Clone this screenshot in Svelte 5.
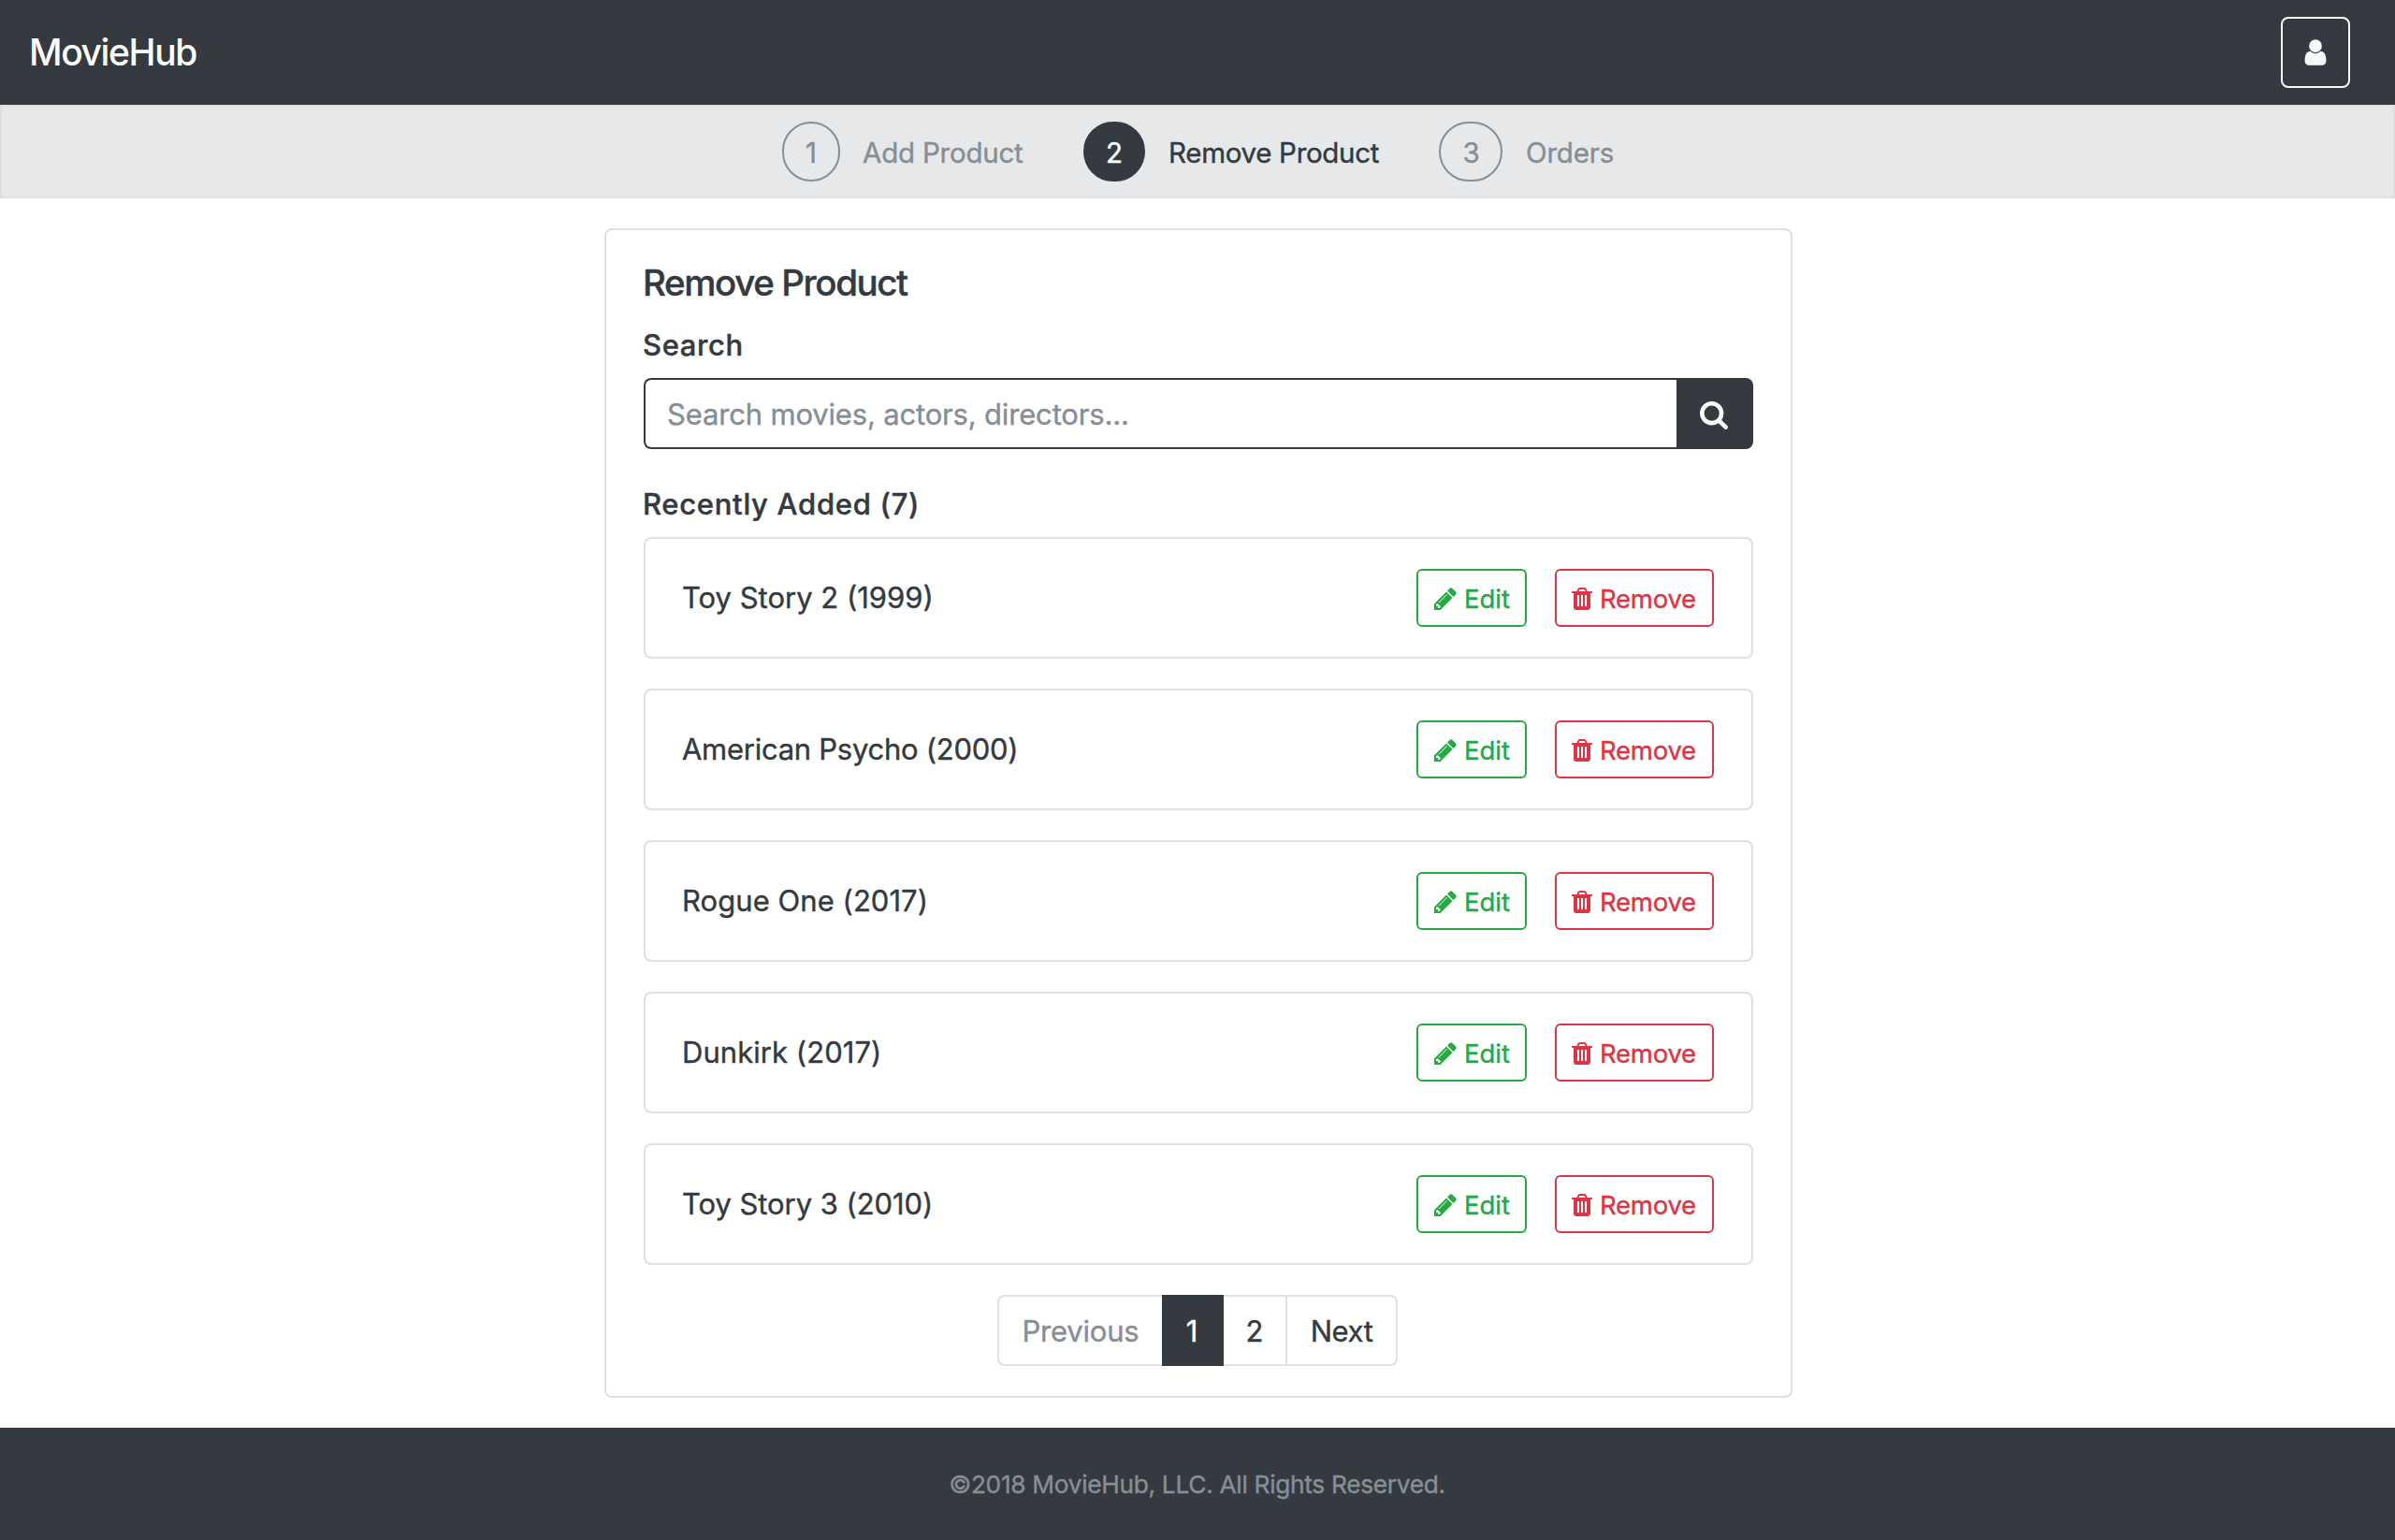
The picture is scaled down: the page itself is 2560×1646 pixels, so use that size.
<script>
  const steps = [
    { n: 1, label: 'Add Product', size: 'one' },
    { n: 2, label: 'Remove Product', size: 'two' },
    { n: 3, label: 'Orders', size: 'three' }
  ];
  const current = 2;
  const movies = [
    { title: 'Toy Story 2 (1999)', tracking: 0 },
    { title: 'American Psycho (2000)', tracking: -0.27 },
    { title: 'Rogue One (2017)', tracking: 0.05 },
    { title: 'Dunkirk (2017)', tracking: 0.05 },
    { title: 'Toy Story 3 (2010)', tracking: -0.06 }
  ];
</script>

<div class="page">
  <header class="navbar">
    <a class="brand" href="#home">MovieHub</a>
    <button class="user" aria-label="Account">
      <svg viewBox="0 0 1792 1792"><path d="M1536 1399q0 109-62.5 187t-150.5 78h-854q-88 0-150.5-78t-62.5-187q0-85 8.5-160.5t31.5-152 58.5-131 94-89 134.5-34.5q131 128 313 128t313-128q76 0 134.5 34.5t94 89 58.5 131 31.5 152 8.5 160.5zm-256-887q0 159-112.5 271.5t-271.5 112.5-271.5-112.5-112.5-271.5 112.5-271.5 271.5-112.5 271.5 112.5 112.5 271.5z" /></svg>
    </button>
  </header>

  <nav class="steps">
    {#each steps as s}
      <div class="step {s.size}" class:active={s.n === current}>
        <span class="circle">{s.n}</span>
        <span class="label">{s.label}</span>
      </div>
    {/each}
  </nav>

  <main class="card">
    <h4>Remove Product</h4>
    <h6 class="search-title">Search</h6>
    <div class="search">
      <input type="text" placeholder="Search movies, actors, directors..." />
      <button aria-label="Search">
        <svg viewBox="64 128 1664 1664"><path d="M1216 832q0-185-131.5-316.5t-316.5-131.5-316.5 131.5-131.5 316.5 131.5 316.5 316.5 131.5 316.5-131.5 131.5-316.5zm512 832q0 52-38 90t-90 38q-54 0-90-38l-343-342q-179 124-399 124-143 0-273.5-55.5t-225-150-150-225-55.5-273.5 55.5-273.5 150-225 225-150 273.5-55.5 273.5 55.5 225 150 150 225 55.5 273.5q0 220-124 399l343 343q37 37 37 90z" /></svg>
      </button>
    </div>
    <h6 class="recent-title">Recently Added (7)</h6>
    <div class="list">
      {#each movies as m}
        <div class="row">
          <span class="title" style="letter-spacing: {m.tracking}px">{m.title}</span>
          <button class="edit">
            <svg viewBox="128 128 1536 1536"><path d="M491 1536l91-91-235-235-91 91v107h128v128h107zm523-928q0-22-22-22-10 0-17 7l-542 542q-7 7-7 17 0 22 22 22 10 0 17-7l542-542q7-7 7-17zm-54-192l416 416-832 832h-416v-416zm683 96q0 53-37 90l-166 166-416-416 166-165q36-38 90-38 53 0 91 38l235 234q37 39 37 91z" /></svg>
            <span>Edit</span>
          </button>
          <button class="remove">
            <svg viewBox="192 128 1408 1536"><path d="M704 1376v-704q0-14-9-23t-23-9h-64q-14 0-23 9t-9 23v704q0 14 9 23t23 9h64q14 0 23-9t9-23zm256 0v-704q0-14-9-23t-23-9h-64q-14 0-23 9t-9 23v704q0 14 9 23t23 9h64q14 0 23-9t9-23zm256 0v-704q0-14-9-23t-23-9h-64q-14 0-23 9t-9 23v704q0 14 9 23t23 9h64q14 0 23-9t9-23zm-544-992h448l-48-117q-7-9-17-11h-317q-10 2-17 11zm928 32v64q0 14-9 23t-23 9h-96v948q0 83-47 143.5t-113 60.5h-832q-66 0-113-58.5t-47-141.5v-952h-96q-14 0-23-9t-9-23v-64q0-14 9-23t23-9h309l70-167q15-37 54-63t79-26h320q40 0 79 26t54 63l70 167h309q14 0 23 9t9 23z" /></svg>
            <span>Remove</span>
          </button>
        </div>
      {/each}
    </div>
    <div class="pagination">
      <span class="prev">Previous</span>
      <span class="num on">1</span>
      <span class="num">2</span>
      <span class="next">Next</span>
    </div>
  </main>

  <footer>©2018 MovieHub, LLC. All Rights Reserved.</footer>
</div>

<style>
  :global(body) {
    margin: 0;
    background: #fff;
  }
  .page,
  .page * {
    box-sizing: border-box;
  }
  .page {
    display: flex;
    flex-direction: column;
    width: 2560px;
    height: 1646px;
    overflow: hidden;
    font-family: Inter, "Liberation Sans", sans-serif;
    font-size: 31px;
    color: #343a40;
    -webkit-text-stroke: 0.4px currentColor;
  }
  button,
  input {
    margin: 0;
    font: inherit;
    outline: 0;
  }
  svg {
    display: block;
    fill: currentColor;
    flex: none;
  }

  .navbar {
    display: flex;
    align-items: center;
    justify-content: space-between;
    height: 112px;
    padding: 0 48px 0 31px;
    background: #343a40;
  }
  .brand {
    color: #fff;
    font-size: 39px;
    font-weight: 500;
    line-height: 48px;
    letter-spacing: -1.4px;
    text-decoration: none;
    -webkit-text-stroke: 0;
  }
  .user {
    display: flex;
    justify-content: center;
    width: 74px;
    height: 76px;
    padding: 20px 0 0;
    border: 2px solid #f8f9fa;
    border-radius: 8px;
    background: transparent;
    color: #f8f9fa;
  }
  .user svg {
    width: 32px;
    height: 32px;
  }

  .steps {
    display: flex;
    height: 100px;
    padding: 16px 0 0 834px;
    border: 2px solid #dddfe1;
    background: #e6e8ea;
    font-size: 29.5px;
    color: #868e96;
  }
  .step {
    display: flex;
    height: 64px;
  }
  .step span {
    line-height: 64px;
    white-space: nowrap;
  }
  .circle {
    display: flex;
    justify-content: center;
    height: 64px;
    border: 2px solid #868e96;
    border-radius: 35px;
  }
  .step .circle {
    line-height: 62px;
  }
  .label {
    padding-top: 1px;
  }
  .one .circle { width: 62px; margin-right: 24px; }
  .one { width: 322px; }
  .one .label { letter-spacing: -0.22px; }
  .two .circle { width: 66px; margin-right: 25px; }
  .two { width: 380px; }
  .two .label { letter-spacing: -0.3px; }
  .three .circle { width: 68px; margin-right: 25px; padding-left: 1px; }
  .three .label { letter-spacing: -0.18px; }
  .active {
    color: #343a40;
  }
  .active .circle {
    background: #343a40;
    border-color: #343a40;
    color: #fff;
  }

  .card {
    width: 1270px;
    height: 1250px;
    margin: 32px 0 32px 646px;
    padding: 32px 40px 0;
    border: 2px solid #dfdfdf;
    border-radius: 8px;
  }
  h4,
  h6 {
    margin: 0;
    font-weight: 500;
    line-height: 48px;
    white-space: nowrap;
  }
  h4 {
    margin-left: -1px;
    font-size: 38.5px;
    letter-spacing: -1.4px;
  }
  h6 {
    font-size: 31px;
    margin-left: -1px;
  }
  .search-title {
    margin-top: 19px;
    letter-spacing: 0.6px;
  }
  .recent-title {
    margin-top: 35px;
    letter-spacing: 0.7px;
  }
  .search {
    display: flex;
    height: 76px;
    margin-top: 11px;
  }
  .search input {
    flex: 1;
    min-width: 0;
    padding: 0 0 0 23px;
    border: 2px solid #343a40;
    border-right: 0;
    border-radius: 8px 0 0 8px;
    background: #fff;
    letter-spacing: -0.17px;
    -webkit-text-stroke: inherit;
  }
  .search input::placeholder {
    color: #868e96;
    opacity: 1;
    -webkit-text-stroke: 0.4px #868e96;
  }
  .search button {
    display: flex;
    align-items: center;
    width: 82px;
    padding: 4px 0 0 25px;
    border: 0;
    border-radius: 0 8px 8px 0;
    background: #343a40;
    color: #fff;
  }
  .search svg {
    width: 30px;
    height: 30px;
  }

  .list {
    display: flex;
    flex-direction: column;
    gap: 32px;
    margin-top: 11px;
  }
  .row {
    display: flex;
    align-items: center;
    height: 130px;
    padding: 0 40px 0 39px;
    border: 2px solid #dfdfdf;
    border-radius: 8px;
  }
  .title {
    flex: 1;
    padding-bottom: 2px;
  }
  .row button {
    display: flex;
    height: 62px;
    border: 2px solid;
    border-radius: 6px;
    background: transparent;
    font-size: 27.5px;
    padding: 0;
  }
  .row button svg {
    height: 24px;
    margin-top: 18px;
  }
  .row button span {
    line-height: 60px;
  }
  .row .edit {
    width: 118px;
    margin-right: 30px;
    padding-left: 17px;
    color: #28a745;
  }
  .edit svg {
    width: 24px;
    margin-right: 8px;
  }
  .row .remove {
    width: 170px;
    padding-left: 16px;
    color: #dc3545;
  }
  .remove svg {
    width: 22px;
    margin-right: 8px;
  }
  .remove span {
    letter-spacing: -0.24px;
  }

  .pagination {
    display: flex;
    width: 428px;
    height: 76px;
    margin: 32px 0 0 378px;
  }
  .pagination span {
    border: 2px solid #dee2e6;
    border-left: 0;
    line-height: 74px;
    text-align: center;
  }
  .pagination .prev {
    width: 176px;
    border-left: 2px solid #dee2e6;
    border-right: 0;
    border-radius: 8px 0 0 8px;
    color: #868e96;
    letter-spacing: -0.2px;
  }
  .pagination .num {
    width: 68px;
  }
  .pagination .on {
    width: 66px;
    background: #343a40;
    border-color: #343a40;
    color: #fff;
  }
  .pagination .next {
    width: 118px;
    border-radius: 0 8px 8px 0;
    letter-spacing: -0.42px;
  }

  footer {
    height: 120px;
    padding: 1px 1px 0 0;
    background: #343a40;
    color: #868e96;
    font-size: 26.3px;
    line-height: 120px;
    letter-spacing: -0.31px;
    text-align: center;
  }
</style>
